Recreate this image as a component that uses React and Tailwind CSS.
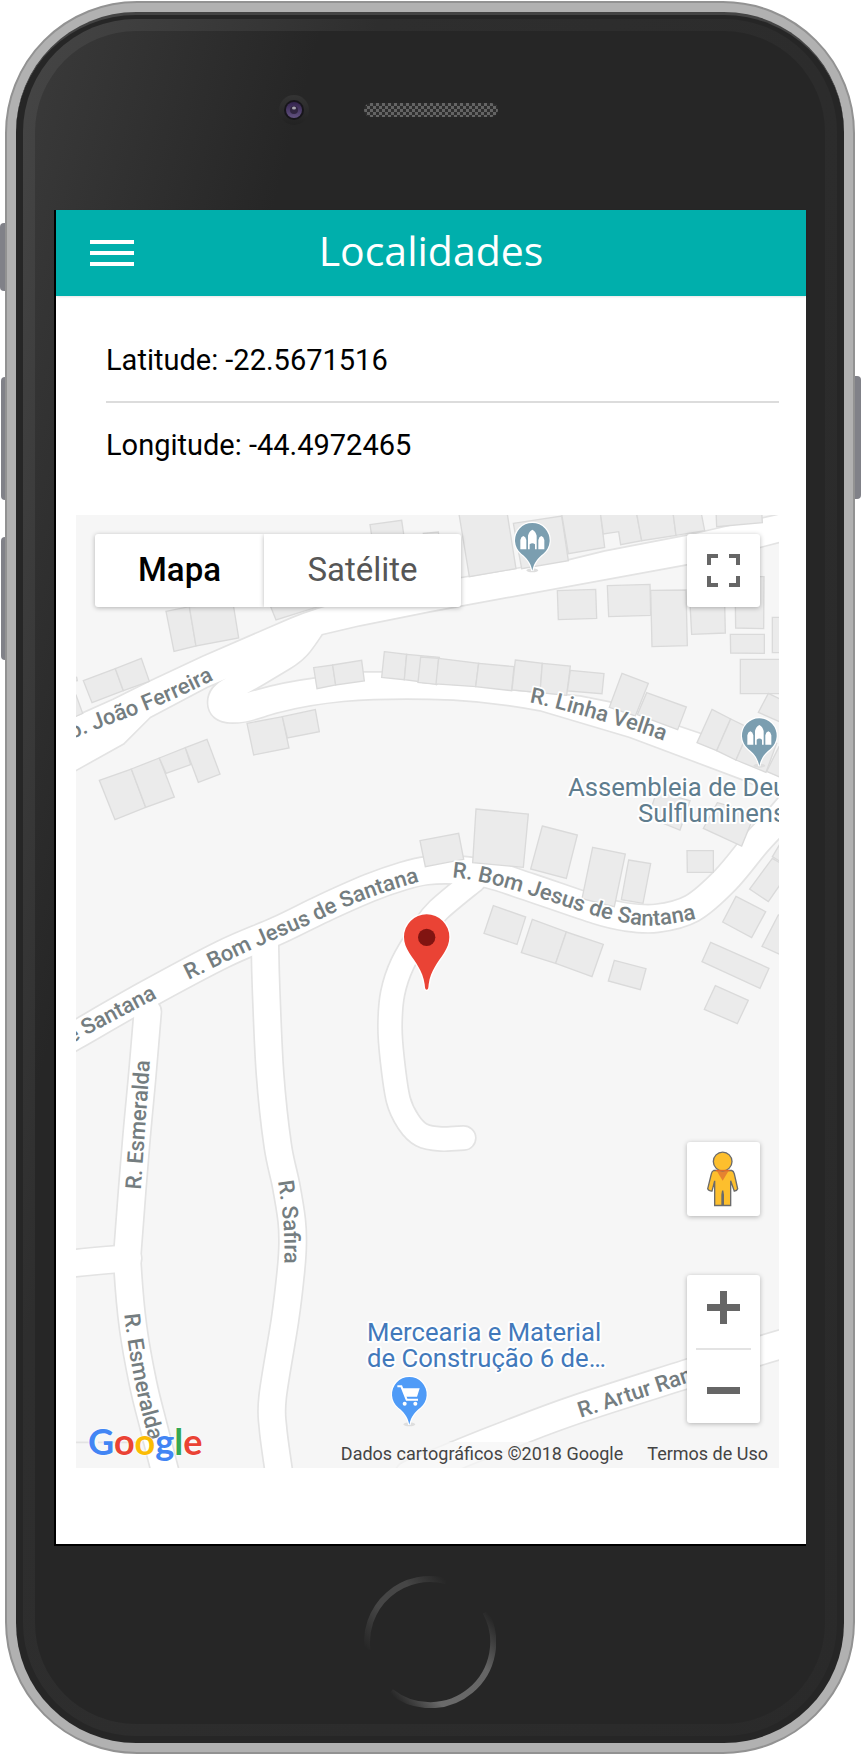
import React from "react";

/* Centre lines of the streets, in map units (three per pixel). */
const streets = [
  {
    width: 78,
    points: [[215, 1490], [198, 1690], [180, 1885], [156, 2190], [155, 2260], [171, 2435], [201, 2605], [233, 2735], [270, 2880]],
  },
  { width: 78, points: [[-40, 2248], [60, 2238], [156, 2230]] },
  {
    width: 78,
    points: [[567, 1290], [570, 1415], [582, 1675], [605, 1890], [630, 2010], [647, 2115], [650, 2185], [645, 2265], [627, 2415], [590, 2645], [591, 2740], [610, 2880]],
  },
  {
    width: 68,
    points: [[1195, 1095], [1087, 1185], [1040, 1245], [980, 1345], [950, 1435], [942, 1535], [949, 1635], [967, 1755], [997, 1820], [1037, 1860], [1095, 1872], [1163, 1869]],
  },
  {
    width: 80,
    points: [[-50, 1588], [0, 1560], [210, 1440], [442, 1317], [604, 1247], [742, 1180], [882, 1118], [982, 1083], [1052, 1067], [1142, 1065], [1237, 1077], [1362, 1117], [1562, 1185], [1650, 1206], [1742, 1210], [1848, 1180], [1948, 1095], [2042, 982], [2109, 910], [2160, 850]],
  },
  {
    width: 82,
    points: [[1000, 2880], [1162, 2812], [1302, 2757], [1502, 2683], [1832, 2577], [2052, 2507], [2150, 2478]],
  },
];

/* The wide avenue and the hairpin that leaves it, as one outline. */
const avenue =
  "M-20 614 L112 555 L222 500 L382 425 L602 330 Q690 290 760 272 L1157 190 L1317 163 L1477 137 L1587 110 L1832 63 L2130 -5 V75 L2052 95 L1832 147 L1062 288 L852 330 L737 357 C705 405 690 430 640 460 L560 508 L512 535 Q610 505 712 492 L862 473 L917 473 L1092 500 L1307 527 L1512 545 L1602 563 L1812 637 L1872 657 L2072 770 L2130 795 V850 L2002 793 L1662 665 L1392 585 Q1260 560 1132 553 Q950 545 802 557 Q700 567 622 587 C560 600 530 622 470 622 C425 622 397 600 397 562 C397 530 420 505 452 490 L392 515 L222 605 L142 685 L-20 775 Z";

const buildings = [
  {
    at: "translate(-18 -15)",
    shapes: [
      "900,44 995,31 1005,100 910,110",
      "1060,70 1105,66 1110,100 1065,100",
      "288,304 358,290 378,408 312,424",
      "358,290 490,285 506,384 378,408",
      "600,285 618,330 745,290 700,270",
      "-10,500 20,502 22,512 -10,516",
      "-10,540 18,555 38,610 -10,632",
      "40,512 136,476 160,542 66,578",
      "136,476 214,445 238,514 160,542",
      "88,811 184,777 227,892 135,929",
      "184,777 268,744 313,861 227,892",
      "268,744 346,713 362,764 288,790",
      "346,713 411,688 450,792 385,817",
      "731,473 788,465 797,525 741,536",
      "788,465 875,451 883,513 797,525",
      "531,640 637,620 657,714 551,735",
      "637,620 736,599 748,665 652,684",
      "943,425 1010,433 1003,509 935,502",
      "1010,433 1108,442 1101,522 1003,509",
    ],
  },
  {
    at: "translate(1062 -15)",
    shapes: [
      "85,0 230,0 258,176 118,200",
      "250,40 395,18 415,152 275,176",
      "393,0 510,0 524,112 415,131",
      "510,0 618,0 635,92 572,104 566,65 520,72",
      "618,0 728,0 738,76 635,92",
      "728,0 812,0 824,62 738,76",
      "858,0 995,0 997,38 860,50",
      "382,242 497,238 500,325 385,329",
      "532,227 660,223 662,316 536,320",
      "662,241 768,240 772,407 666,410",
      "780,280 884,280 886,369 785,373",
      "915,200 1002,200 1001,356 917,354",
      "901,373 1003,373 1003,430 902,429",
      "1027,322 1060,322 1060,428 1027,428",
      "931,448 1060,448 1060,551 931,551",
      "26,445 20,523 21,522 -20,518 28,445",
      "-28,441 26,445 20,523 -36,517",
      "26,445 146,460 137,530 18,522",
      "146,460 252,470 245,542 137,530",
      "256,450 337,460 330,548 246,540",
      "337,460 421,468 410,556 330,548",
      "421,481 522,491 516,551 412,543",
      "576,490 655,520 616,618 538,592",
      "650,548 769,591 743,659 622,614",
      "846,598 902,627 860,722 801,698",
      "902,627 960,655 918,750 860,722",
      "960,655 1040,700 1008,787 918,750",
      "1047,710 1080,700 1060,806 1010,784",
      "1015,550 1060,572 1060,640 985,607",
      "680,845 780,872 750,960 655,922",
      "862,878 975,910 935,1008 820,955",
    ],
  },
  {
    at: "translate(1062 915)",
    shapes: [
      "138,-33 295,-18 280,142 128,128",
      "-30,62 86,40 101,118 -14,140",
      "337,18 442,45 409,175 302,147",
      "488,82 586,102 553,260 456,236",
      "596,120 662,131 639,250 574,239",
      "771,92 850,92 850,157 772,157",
      "190,257 287,291 261,373 162,340",
      "307,298 409,336 377,430 274,398",
      "409,336 520,373 486,470 377,430",
      "553,421 648,446 631,509 535,483",
      "918,229 1007,275 965,353 878,306",
      "1027,115 1060,134 1060,180 1015,245 959,207",
      "1050,72 1070,80 1060,130 1027,110",
      "1045,285 1070,290 1060,408 996,379",
      "842,367 1017,445 990,505 816,425",
      "856,497 955,541 922,611 823,568",
    ],
  },
];

const streetLabels = [
  { id: "joao-ferreira", text: "o. João Ferreira", anchorEnd: true, points: [[-60, 692], [57, 645], [207, 588], [320, 540], [414, 494]] },
  { id: "linha-velha", text: "R. Linha Velha", points: [[1360, 562], [1440, 580], [1590, 622], [1700, 655], [1830, 702]] },
  { id: "santana-1", text: "de Santana", anchorEnd: true, points: [[-120, 1646], [30, 1562], [140, 1503], [244, 1448]] },
  { id: "santana-2", text: "R. Bom Jesus de Santana", points: [[338, 1395], [522, 1306], [700, 1228], [802, 1180], [920, 1134], [1090, 1082]] },
  { id: "santana-3", text: "R. Bom Jesus de Santana", points: [[1128, 1087], [1204, 1098], [1330, 1130], [1514, 1189], [1602, 1214], [1722, 1232], [1862, 1211], [1930, 1180]] },
  { id: "esmeralda-1", text: "R. Esmeralda", points: [[194, 2024], [208, 1830], [226, 1580]] },
  { id: "safira", text: "R. Safira", points: [[606, 1999], [619, 2090], [625, 2180], [624, 2320]] },
  { id: "esmeralda-2", text: "R. Esmeralda", points: [[145, 2398], [156, 2485], [180, 2620], [215, 2760], [240, 2850]] },
  { id: "artur", text: "R. Artur Ramos", points: [[1514, 2708], [1717, 2642], [1850, 2598], [2060, 2530]] },
];

/* Smooth curve through a list of points. */
function curve(points) {
  let d = `M${points[0][0]} ${points[0][1]}`;
  for (let i = 0; i < points.length - 1; i++) {
    const before = points[i - 1] || points[i];
    const from = points[i];
    const to = points[i + 1];
    const after = points[i + 2] || to;
    d += ` C${from[0] + (to[0] - before[0]) / 6} ${from[1] + (to[1] - before[1]) / 6} ${to[0] - (after[0] - from[0]) / 6} ${to[1] - (after[1] - from[1]) / 6} ${to[0]} ${to[1]}`;
  }
  return d;
}

function PlacePin({ x, y, className, children }) {
  return (
    <g transform={`translate(${x} ${y})`}>
      <ellipse cx="0" cy="91" rx="18" ry="6" className="fill-[#dedede]" />
      <path
        d="M0 92 C-5 66 -17 54 -33 41 A52 52 0 1 1 33 41 C17 54 5 66 0 92 Z"
        className={className}
        stroke="#fff"
        strokeWidth="7"
        paintOrder="stroke"
      />
      {children}
    </g>
  );
}

function ChurchGlyph() {
  return (
    <path
      fill="#fff"
      d="M-36 28 V0 Q-34 -10 -27 -12 Q-20 -10 -18 0 V28 Z M18 28 V0 Q20 -10 27 -12 Q34 -10 36 0 V28 Z M-13 28 V-13 Q-10 -26 0 -31 Q10 -26 13 -13 V28 H8 V13 Q0 6 -8 13 V28 Z"
    />
  );
}

function MapCanvas() {
  return (
    <svg
      viewBox="0 0 2109 2859"
      preserveAspectRatio="xMidYMid slice"
      className="block h-full w-full bg-[#f6f6f6]"
      role="img"
      aria-label="Mapa"
    >
      <g fill="none" stroke="#e3e3e3">
        <path d={avenue} strokeWidth="10" strokeLinejoin="round" />
        {streets.map((s, i) => (
          <path key={i} d={curve(s.points)} strokeWidth={s.width + 10} strokeLinecap="round" />
        ))}
        <path d="M0 2782 H200" strokeWidth="5" strokeDasharray="56 10" />
      </g>
      <path d={avenue} fill="#fff" />
      <g fill="none" stroke="#fff">
        {streets.map((s, i) => (
          <path key={i} d={curve(s.points)} strokeWidth={s.width} strokeLinecap="round" />
        ))}
      </g>
      {buildings.map((block) => (
        <g key={block.at} transform={block.at} fill="#ebebeb" stroke="#dadada" strokeWidth="4">
          {block.shapes.map((shape) => (
            <polygon key={shape} points={shape} />
          ))}
        </g>
      ))}

      <g
        className="font-['Roboto',sans-serif] text-[66px] font-medium"
        fill="#747d80"
        stroke="#fff"
        strokeWidth="10"
        strokeLinejoin="round"
        paintOrder="stroke"
      >
        {streetLabels.map((label) => (
          <React.Fragment key={label.id}>
            <path id={label.id} d={curve(label.points)} fill="none" stroke="none" />
            <text textAnchor={label.anchorEnd ? "end" : "start"}>
              <textPath href={`#${label.id}`} startOffset={label.anchorEnd ? "100%" : "0"}>
                {label.text}
              </textPath>
            </text>
          </React.Fragment>
        ))}
      </g>

      <g
        className="font-['Roboto',sans-serif] text-[77px]"
        stroke="#fff"
        strokeWidth="12"
        strokeLinejoin="round"
        paintOrder="stroke"
      >
        <text x="1476" y="843" fill="#5f7d8e">Assembleia de Deus</text>
        <text x="1686" y="921" fill="#5f7d8e">Sulfluminense</text>
        <text x="873" y="2479" fill="#4279bb">Mercearia e Material</text>
        <text x="873" y="2557" fill="#4279bb">de Construção 6 de…</text>
      </g>

      <PlacePin x={1369} y={75} className="fill-[#7b9eb0]">
        <ChurchGlyph />
      </PlacePin>
      <PlacePin x={2050} y={661} className="fill-[#7b9eb0]">
        <ChurchGlyph />
      </PlacePin>
      <PlacePin x={1000} y={2637} className="fill-[#4f9bf7]">
        <path d="M-36 -23 H-24 L-8 17 H26" fill="none" stroke="#fff" strokeWidth="6" />
        <path d="M-22 -17 H31 L23 8 H-12 Z" fill="#fff" />
        <circle cx="-14" cy="29" r="6" fill="#fff" />
        <circle cx="18" cy="29" r="6" fill="#fff" />
      </PlacePin>

      <path
        d="M1052 1424 C1047 1424 1047 1418 1046 1408 C1040 1366 1018 1342 1000 1314 C990 1298 984 1284 984 1266 A68 68 0 0 1 1120 1266 C1120 1284 1114 1298 1104 1314 C1086 1342 1064 1366 1058 1408 C1057 1418 1057 1424 1052 1424 Z"
        fill="#ea4335"
        stroke="#fff"
        strokeWidth="8"
        paintOrder="stroke"
      />
      <circle cx="1052" cy="1267" r="26" fill="#811411" />
    </svg>
  );
}

function Bezel() {
  return (
    <div className="grid h-[179px] grid-cols-[1fr_auto_1fr] items-center pb-[22px] pl-[2px]">
      <svg viewBox="0 0 32 32" className="mr-[54px] size-8 justify-self-end" aria-hidden="true">
        <defs>
          <linearGradient id="rim" x1="0" y1="0" x2="0" y2="1">
            <stop offset="0" stopColor="#343434" />
            <stop offset="1" stopColor="#222" />
          </linearGradient>
          <linearGradient id="lens" x1="0" y1="0" x2="0" y2="1">
            <stop offset="0" stopColor="#33234d" />
            <stop offset="1" stopColor="#625280" />
          </linearGradient>
        </defs>
        <circle cx="16" cy="16" r="15" fill="url(#rim)" />
        <circle cx="16" cy="16" r="10" fill="#17151b" />
        <circle cx="16" cy="16" r="8" fill="url(#lens)" />
        <circle cx="16" cy="16" r="4" fill="#302540" />
        <ellipse cx="16" cy="14" rx="2" ry="1.5" fill="#a9a6b0" />
      </svg>
      <svg className="h-[14px] w-[134px]" aria-hidden="true">
        <defs>
          <pattern id="mesh" width="6" height="6" patternUnits="userSpaceOnUse">
            <rect width="6" height="6" fill="#2e2e2e" />
            <rect width="3" height="3" fill="#646464" />
            <rect x="3" y="3" width="3" height="3" fill="#646464" />
          </pattern>
        </defs>
        <rect width="134" height="14" rx="7" fill="url(#mesh)" />
      </svg>
    </div>
  );
}

function HomeButton() {
  return (
    <button type="button" aria-label="Início" className="size-[132px] rounded-full">
      <svg viewBox="0 0 132 132" className="size-full" fill="none" strokeWidth="6" aria-hidden="true">
        <defs>
          <linearGradient id="arc-top" gradientUnits="userSpaceOnUse" x1="3" y1="74" x2="82" y2="5">
            <stop offset="0" stopColor="#262626" />
            <stop offset=".35" stopColor="#464646" />
            <stop offset=".7" stopColor="#464646" />
            <stop offset="1" stopColor="#262626" />
          </linearGradient>
          <linearGradient id="arc-bottom" gradientUnits="userSpaceOnUse" x1="123" y1="36" x2="27" y2="118">
            <stop offset="0" stopColor="#262626" />
            <stop offset=".3" stopColor="#656565" />
            <stop offset=".75" stopColor="#6a6a6a" />
            <stop offset="1" stopColor="#262626" />
          </linearGradient>
        </defs>
        <path d="M3.500 74 A63 63 0 0 1 82 5.100" stroke="url(#arc-top)" />
        <path d="M121.500 36 A63 63 0 0 1 27 115.500" stroke="url(#arc-bottom)" />
      </svg>
    </button>
  );
}

const control = "bg-white shadow-[0_1px_5px_rgba(0,0,0,0.28)]";

function MapView() {
  return (
    <section className="relative mt-[29px] mr-[27px] mb-[76px] ml-5 aspect-[703/953] overflow-hidden">
      <MapCanvas />

      <div className="absolute top-[19px] left-[19px] flex h-[73px] rounded-[3px] text-[33px]">
        <button type="button" aria-pressed="true" className={`${control} w-[169px] rounded-l-[3px] pb-[2px] font-medium text-black`}>
          Mapa
        </button>
        <button type="button" aria-pressed="false" className={`${control} w-[197px] rounded-r-[3px] pb-[2px] text-[#565656]`}>
          Satélite
        </button>
      </div>

      <button
        type="button"
        aria-label="Tela cheia"
        className={`${control} absolute top-[19px] right-[19px] flex size-[73px] items-center justify-center rounded-[3px]`}
      >
        <svg viewBox="0 0 33 33" className="size-[33px]" fill="none" stroke="#666" strokeWidth="4" aria-hidden="true">
          <path d="M2 11 V2 H11 M22 2 H31 V11 M31 22 V31 H22 M11 31 H2 V22" />
        </svg>
      </button>

      <div className="absolute right-[19px] bottom-[45px] flex w-[73px] flex-col gap-[59px]">
        <button type="button" aria-label="Street View" className={`${control} h-[74px] rounded-[3px]`}>
          <svg viewBox="0 0 219 221" className="h-[74px] w-[73px]" fill="#fdbf2d" stroke="#6b6b6b" strokeWidth="4" aria-hidden="true">
            <path d="M80 85 H134 Q140 87 142 95 L152 140 Q150 146 142 147 L131 116 V190 H109 V158 L107 145 L105 158 V190 H83 V116 L75 147 Q65 147 62 140 L73 95 Q75 87 80 85 Z" />
            <path d="M89 86 H125 L107 116 Z" fill="#e58230" stroke="none" />
            <circle cx="107" cy="58" r="28" />
            <path d="M86 85 H128" stroke="#de6a2a" />
          </svg>
        </button>
        <div className={`${control} flex flex-col rounded-[3px]`}>
          <button type="button" aria-label="Aumentar zoom" className="flex h-[73px] items-center justify-center pb-2">
            <svg viewBox="0 0 33 33" className="size-[33px]" stroke="#666" strokeWidth="7" aria-hidden="true">
              <path d="M16.500 0 V33 M0 16.500 H33" />
            </svg>
          </button>
          <div className="mx-[9px] h-[2px] bg-[#e3e3e3]" />
          <button type="button" aria-label="Diminuir zoom" className="flex h-[73px] items-center justify-center pt-2">
            <svg viewBox="0 0 33 33" className="size-[33px]" stroke="#666" strokeWidth="7" aria-hidden="true">
              <path d="M0 16.500 H33" />
            </svg>
          </button>
        </div>
      </div>

      <a
        href="#google"
        aria-label="Google"
        className="absolute bottom-0 left-3 font-['Lato',sans-serif] text-[36px] leading-[54px] font-bold text-[#4285f4] [text-shadow:0_0_2px_#fff,0_0_2px_#fff]"
      >
        <span>G</span>
        <span className="text-[#ea4335]">o</span>
        <span className="text-[#fbbc05]">o</span>
        <span>g</span>
        <span className="text-[#34a853]">l</span>
        <span className="text-[#ea4335]">e</span>
      </a>

      <div className="absolute right-0 bottom-0 flex h-[26px] items-center gap-6 bg-[#f5f5f5]/75 pr-[11px] pb-[2px] pl-[10px] text-[18px] leading-6 text-[#444]">
        <span>Dados cartográficos ©2018 Google</span>
        <a href="#termos">Termos de Uso</a>
      </div>
    </section>
  );
}

function Screen() {
  return (
    <main className="mx-[19px] border-b-2 border-l-2 border-black bg-white font-['Roboto',sans-serif]">
      <header className="grid h-[86px] grid-cols-[1fr_auto_1fr] items-center bg-[#00afac] text-white shadow-[0_1px_2px_rgba(0,0,0,0.1)]">
        <button type="button" aria-label="Menu" className="ml-[34px] justify-self-start">
          <svg viewBox="0 0 44 26" className="h-[26px] w-11" aria-hidden="true">
            <path d="M0 2 H44 M0 13 H44 M0 24 H44" stroke="#fff" strokeWidth="4" />
          </svg>
        </button>
        <h1 className="pb-[6px] font-['Open_Sans',sans-serif] text-[41px] leading-[56px]">Localidades</h1>
      </header>
      <ul className="mt-[22px] mr-[27px] ml-[50px] text-[29px] text-black">
        <li className="flex h-[85px] items-center border-b-2 border-[#dcdcdc] pt-[2px]">Latitude: -22.5671516</li>
        <li className="flex h-[83px] items-center pt-[2px]">Longitude: -44.4972465</li>
      </ul>
      <MapView />
    </main>
  );
}

export default function App() {
  return (
    <div className="min-h-screen bg-white pt-px pr-[7px] pl-[5px]">
      <div className="relative">
        <div className="absolute top-[222px] -left-[5px] h-[68px] w-[7px] rounded-l-[4px] bg-[#808188]" />
        <div className="absolute top-[376px] -left-[4px] h-[123px] w-[6px] rounded-l-[4px] bg-[#808188]" />
        <div className="absolute top-[536px] -left-[4px] h-[123px] w-[6px] rounded-l-[4px] bg-[#808188]" />
        <div className="absolute top-[375px] -right-[6px] h-[123px] w-[7px] rounded-r-[4px] bg-[#808188]" />
        <div className="relative rounded-[132px] border-2 border-[#929292] bg-[#b1b1b1] p-[9px]">
          <div className="rounded-[120px] border-t-[3px] border-[#444] bg-[#262626] px-[7px] pt-1 pb-[7px]">
            <div className="rounded-[113px] bg-[linear-gradient(105deg,#464646_0%,#2e2e2e_28%,#2a2a2a_100%)] p-3">
              <div className="rounded-[101px] bg-[linear-gradient(105deg,#3a3a3a_0%,#262626_23%)]">
                <Bezel />
                <Screen />
                <div className="flex h-[178px] items-center justify-center pt-[14px]">
                  <HomeButton />
                </div>
              </div>
            </div>
          </div>
        </div>
      </div>
    </div>
  );
}
